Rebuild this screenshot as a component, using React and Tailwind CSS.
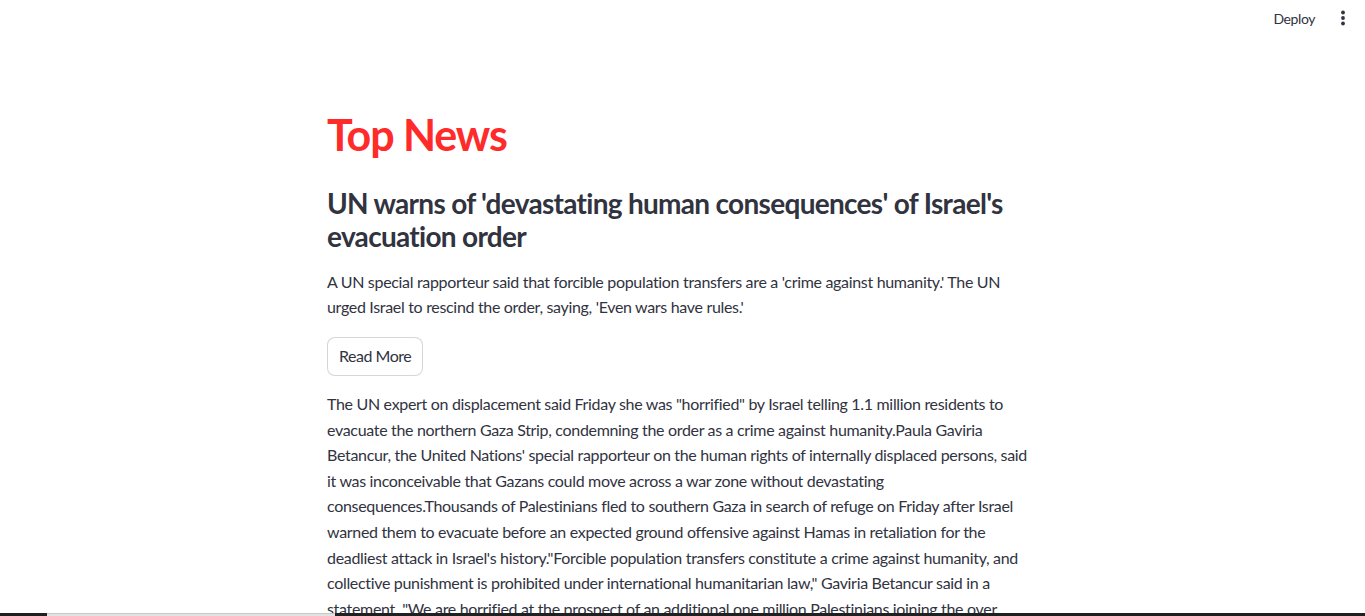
const body =
  "The UN expert on displacement said Friday she was \"horrified\" by Israel telling 1.1 million residents to evacuate the northern Gaza Strip, condemning the order as a crime against humanity.Paula Gaviria Betancur, the United Nations' special rapporteur on the human rights of internally displaced persons, said it was inconceivable that Gazans could move across a war zone without devastating consequences.Thousands of Palestinians fled to southern Gaza in search of refuge on Friday after Israel warned them to evacuate before an expected ground offensive against Hamas in retaliation for the deadliest attack in Israel's history.\"Forcible population transfers constitute a crime against humanity, and collective punishment is prohibited under international humanitarian law,\" Gaviria Betancur said in a statement. \"We are horrified at the prospect of an additional one million Palestinians joining the over 400,000 people already displaced in Gaza.\"";

function MoreIcon() {
  return (
    <svg width="20" height="20" viewBox="0 0 20 20" fill="#31333f">
      <circle cx="10" cy="4.5" r="1.9" />
      <circle cx="10" cy="10" r="1.9" />
      <circle cx="10" cy="15.5" r="1.9" />
    </svg>
  );
}

export default function App() {
  return (
    <div className="relative h-[616px] overflow-hidden bg-white text-[#31333f] font-['Lato',sans-serif] tracking-[-0.02em]">
      <header className="flex h-[36px] items-center justify-end pr-3">
        <button className="text-[14px] tracking-[-0.03em] text-[#31333f]">Deploy</button>
        <button className="ml-[18px]">
          <MoreIcon />
        </button>
      </header>

      <div className="pr-[7px]">
        <main className="mx-auto flex max-w-[736px] flex-col px-4">
          <h1 className="mt-[73px] text-[43px] font-bold leading-[1.2] tracking-[-0.025em] text-[#ff2b2b]">Top News</h1>
          <h3 className="mt-[26px] text-[28px] font-bold leading-[1.2] tracking-[-0.025em]">
            UN warns of 'devastating human consequences' of Israel's evacuation order
          </h3>
          <p className="mt-[15px] text-[16px] leading-[1.6]">
            A UN special rapporteur said that forcible population transfers are a 'crime against humanity.' The UN urged Israel to rescind the order, saying, 'Even wars have rules.'
          </p>
          <div className="mt-[17px]">
            <button className="min-h-[39px] rounded-lg border border-[rgba(49,51,63,0.2)] bg-white px-[11px] py-1 text-[16px] tracking-[-0.03em]">
              Read More
            </button>
          </div>
          <p className="mt-[15px] text-[16px] leading-[1.6]">{body}</p>
        </main>
      </div>

      <div className="absolute inset-x-0 bottom-0 h-[3px] bg-[#202020]">
        <div className="ml-[47px] h-full w-[288px] border-t border-[#c8c8c8] bg-[#e2e2e2]" />
      </div>
    </div>
  );
}
